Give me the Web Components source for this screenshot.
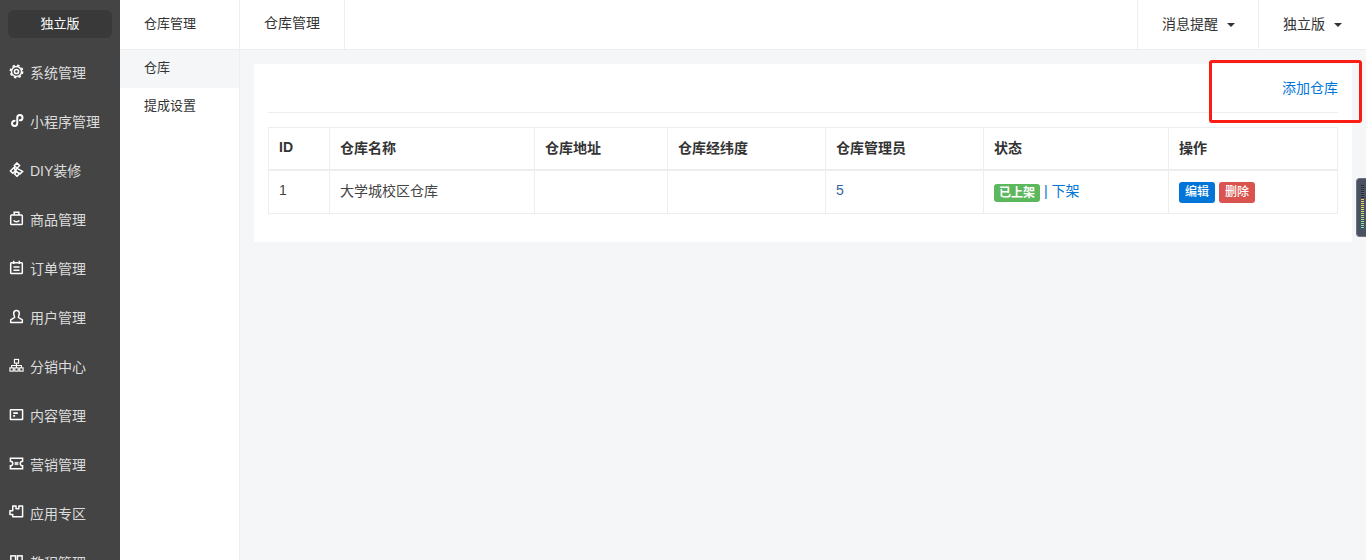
<!DOCTYPE html>
<html>
<head>
<meta charset="utf-8">
<style>
  html, body { margin: 0; height: 100%; overflow: hidden; }
  body { font: 14px "Liberation Sans", "Noto Sans CJK SC", sans-serif; color: #333; background: #f5f6f8; }
</style>
</head>
<body>
<admin-shell>
  <side-menu slot="side">
    <menu-item label="系统管理"><svg viewBox="0 0 16 16"><circle cx="8" cy="8" r="5.4"/><circle cx="8" cy="8" r="6.600" stroke-width="1.600" stroke-dasharray="2.600 2.580"/><circle cx="8" cy="8" r="2.200" stroke-width="1.700"/></svg></menu-item>
    <menu-item label="小程序管理"><svg viewBox="0 0 16 16"><path d="M6 8.200a2.800 2.800 0 1 0 2.800 2.800V5a2.800 2.800 0 1 1 2.800 2.800" stroke-width="2.100" stroke-linecap="round"/></svg></menu-item>
    <menu-item label="DIY装修"><svg viewBox="0 0 16 16"><path d="M8.500 1l2.800 2.800-2.800 2.800-2.800-2.800zM5.500 5.500L1.500 9.500l2.500 2.500 2.500-2.500zM8 6.500l6.500 3.500-2.500 2.500-5-2.500zM8 10l-2 2.800 2.500 2.500 2.500-2.500z"/></svg></menu-item>
    <menu-item label="商品管理"><svg viewBox="0 0 16 16"><rect x="1.800" y="4.200" width="12.400" height="10.300" rx="1"/><path d="M5.500 4.200V1.300h5v2.900M5 10c1 2 5 2 6 0"/></svg></menu-item>
    <menu-item label="订单管理"><svg viewBox="0 0 16 16"><rect x="1.800" y="2.800" width="12.400" height="11.700" rx=".8"/><path d="M5 .8v3.400M11 .8v3.400M4.800 7.500h6.400M4.800 10.800h6.400"/></svg></menu-item>
    <menu-item label="用户管理"><svg viewBox="0 0 16 16"><path d="M5 4.500a3 3 0 0 1 6 0c0 2-1 3-1 4.500l4.200 2.500v3H1.800v-3L6 9c0-1.500-1-2.500-1-4.500z" stroke-linejoin="round"/></svg></menu-item>
    <menu-item label="分销中心"><svg viewBox="0 0 16 16"><g stroke-width="1.200"><rect x="5.800" y="1.500" width="4.400" height="4"/><rect x="1" y="10.500" width="3.600" height="3.500"/><rect x="6.200" y="10.500" width="3.600" height="3.500"/><rect x="11.400" y="10.500" width="3.600" height="3.500"/><path d="M2.800 10.500V8h10.400v2.500M8 5.500v5"/></g></svg></menu-item>
    <menu-item label="内容管理"><svg viewBox="0 0 16 16"><rect x="1.500" y="2.800" width="13" height="10.400" rx=".5"/><path d="M4.500 6.500h5M4.500 9.500h2" stroke-width="1.800"/></svg></menu-item>
    <menu-item label="营销管理"><svg viewBox="0 0 16 16"><path d="M1.500 2.500h13v3a2.500 2.500 0 0 0 0 5v3h-13v-3a2.500 2.500 0 0 0 0-5z"/><rect x="6" y="6.300" width="4" height="3.400" fill="#ddd" stroke="none"/></svg></menu-item>
    <menu-item label="应用专区"><svg viewBox="0 0 16 16"><path d="M4 1h3.500v3h3V1h4v11.500H4V10H1V6h3z" stroke-linejoin="round"/></svg></menu-item>
    <menu-item label="教程管理"><svg viewBox="0 0 16 16"><rect x="2" y="2" width="5" height="12"/><rect x="9" y="2" width="5" height="12"/></svg></menu-item>
  </side-menu>
  <sub-menu slot="sub"></sub-menu>
  <top-bar slot="top"></top-bar>
  <warehouse-panel></warehouse-panel>
</admin-shell>
<side-handle></side-handle>
<script>
class AdminShell extends HTMLElement {
  constructor() {
    super();
    this.attachShadow({ mode: "open" }).innerHTML = `
    <style>
      :host { display: grid; grid-template-columns: 120px 120px 1fr; grid-template-rows: 50px 1fr; height: 560px; overflow: hidden; }
      .side { grid-row: 1 / 3; min-height: 0; overflow: hidden; }
      .sub { grid-row: 1 / 3; min-height: 0; }
      .main { min-width: 0; padding: 14px 14px 0; }
    </style>
    <div class="side"><slot name="side"></slot></div>
    <div class="sub"><slot name="sub"></slot></div>
    <slot name="top"></slot>
    <div class="main"><slot></slot></div>`;
  }
}

class SideMenu extends HTMLElement {
  constructor() {
    super();
    this.attachShadow({ mode: "open" }).innerHTML = `
    <style>
      :host { display: block; height: 100%; box-sizing: border-box; padding-top: 10px; background: #444; color: #ddd; }
      .brand { height: 28px; margin: 0 8px; background: #393939; border-radius: 6px; color: #fff; font-size: 13px; line-height: 28px; text-align: center; }
      .list { padding-top: 9px; }
    </style>
    <div class="brand">独立版</div>
    <div class="list"><slot></slot></div>`;
  }
}

class MenuItem extends HTMLElement {
  constructor() {
    super();
    this.attachShadow({ mode: "open" }).innerHTML = `
    <style>
      :host { display: flex; align-items: center; height: 49px; padding-left: 9px; gap: 6px; font-size: 14px; color: #ddd; white-space: nowrap; }
      ::slotted(svg) { width: 15px; height: 15px; flex: none; fill: none; stroke: #fff; stroke-width: 1.6; }
    </style>
    <slot></slot><span>${this.getAttribute("label")}</span>`;
  }
}

class SubMenu extends HTMLElement {
  constructor() {
    super();
    this.attachShadow({ mode: "open" }).innerHTML = `
    <style>
      :host { display: block; height: 100%; background: #fff; border-right: 1px solid #eee; box-sizing: border-box; font-size: 13px; }
      .title { height: 49px; line-height: 48px; padding-left: 24px; border-bottom: 1px solid #eee; }
      .row { height: 38px; line-height: 36px; padding-left: 24px; }
      .on { background: #f5f6f8; }
    </style>
    <div class="title">仓库管理</div>
    <div class="row on">仓库</div>
    <div class="row">提成设置</div>`;
  }
}

class TopBar extends HTMLElement {
  constructor() {
    super();
    this.attachShadow({ mode: "open" }).innerHTML = `
    <style>
      :host { display: flex; height: 50px; box-sizing: border-box; background: #fff; border-bottom: 1px solid #eee; font-size: 14px; line-height: 47px; }
      .tab { padding: 0 24px; border-right: 1px solid #eee; }
      .gap { flex: 1; }
      .drop { padding: 0 23px 0 24px; border-left: 1px solid #eee; display: flex; align-items: center; gap: 9px; }
      .drop + .drop { padding-right: 24px; }
      .caret { width: 0; height: 0; border: 4px solid transparent; border-top-color: #333; border-bottom: 0; }
    </style>
    <div class="tab">仓库管理</div>
    <div class="gap"></div>
    <div class="drop">消息提醒<i class="caret"></i></div>
    <div class="drop">独立版<i class="caret"></i></div>`;
  }
}

class WarehousePanel extends HTMLElement {
  constructor() {
    super();
    this.attachShadow({ mode: "open" }).innerHTML = `
    <style>
      :host { display: block; position: relative; height: 178px; box-sizing: border-box; padding: 0 14px; background: #fff; font-size: 14px; }
      .head { height: 49px; box-sizing: border-box; border-bottom: 1px solid #eee; text-align: right; line-height: 48px; color: #0275d8; }
      .mark { position: absolute; left: 955px; top: -4px; width: 153px; height: 63px; box-sizing: border-box; border: 3px solid #fb1d13; border-radius: 3px; }
      table { width: 1069px; margin-top: 14px; border-collapse: collapse; table-layout: fixed; }
      th, td { border: 1px solid #eee; padding: 0 10px; text-align: left; color: #444; box-sizing: border-box; }
      th { height: 42px; padding-bottom: 2px; border-bottom-width: 2px; font-weight: bold; color: #333; }
      td { height: 44px; padding-bottom: 4px; }
      td.state { padding-bottom: 2px; }
      a { color: #0275d8; }
      .blue { color: #336699; }
      .tag { display: inline-block; vertical-align: -1px; padding: 0 5px; line-height: 18px; height: 18px; border-radius: 3px; background: #5cb85c; color: #fff; font-size: 12px; font-weight: bold; }
      .btn { display: inline-block; vertical-align: -6px; padding: 0 6px; height: 21px; line-height: 21px; border-radius: 3px; color: #fff; font-size: 12px; font-weight: 500; }
      .edit { background: #0275d8; }
      .del { background: #d9534f; }
    </style>
    <div class="head">添加仓库</div>
    <div class="mark"></div>
    <table>
      <colgroup><col style="width:61px"><col style="width:205px"><col style="width:133px"><col style="width:158px"><col style="width:158px"><col style="width:185px"><col style="width:169px"></colgroup>
      <tr><th>ID</th><th>仓库名称</th><th>仓库地址</th><th>仓库经纬度</th><th>仓库管理员</th><th>状态</th><th>操作</th></tr>
      <tr><td>1</td><td>大学城校区仓库</td><td></td><td></td><td class="blue">5</td>
        <td class="state"><span class="tag">已上架</span> <a>| 下架</a></td>
        <td><span class="btn edit">编辑</span> <span class="btn del">删除</span></td></tr>
    </table>`;
  }
}

class SideHandle extends HTMLElement {
  constructor() {
    super();
    this.attachShadow({ mode: "open" }).innerHTML = `
    <style>
      :host { position: absolute; right: 0; top: 178px; width: 10px; height: 59px; box-sizing: border-box; padding: 6px 2px 7px 4px; background: #4a5160; border: 1px solid #6d7380; border-right: 0; border-radius: 4px 0 0 4px; display: flex; flex-direction: column; }
      .dark { height: 13px; background: repeating-linear-gradient(#22262e 0 1px, #5a6070 1px 2px); }
      .level { flex: 1; margin-top: 1px; background: repeating-linear-gradient(transparent 0 1px, #4a5160 1px 2px), linear-gradient(#edc55f, #dfe26f 35%, #a5e08a 65%, #6fe0c6); }
    </style>
    <div class="dark"></div>
    <div class="level"></div>`;
  }
}

customElements.define("admin-shell", AdminShell);
customElements.define("side-menu", SideMenu);
customElements.define("menu-item", MenuItem);
customElements.define("sub-menu", SubMenu);
customElements.define("top-bar", TopBar);
customElements.define("warehouse-panel", WarehousePanel);
customElements.define("side-handle", SideHandle);
</script>
</body>
</html>
